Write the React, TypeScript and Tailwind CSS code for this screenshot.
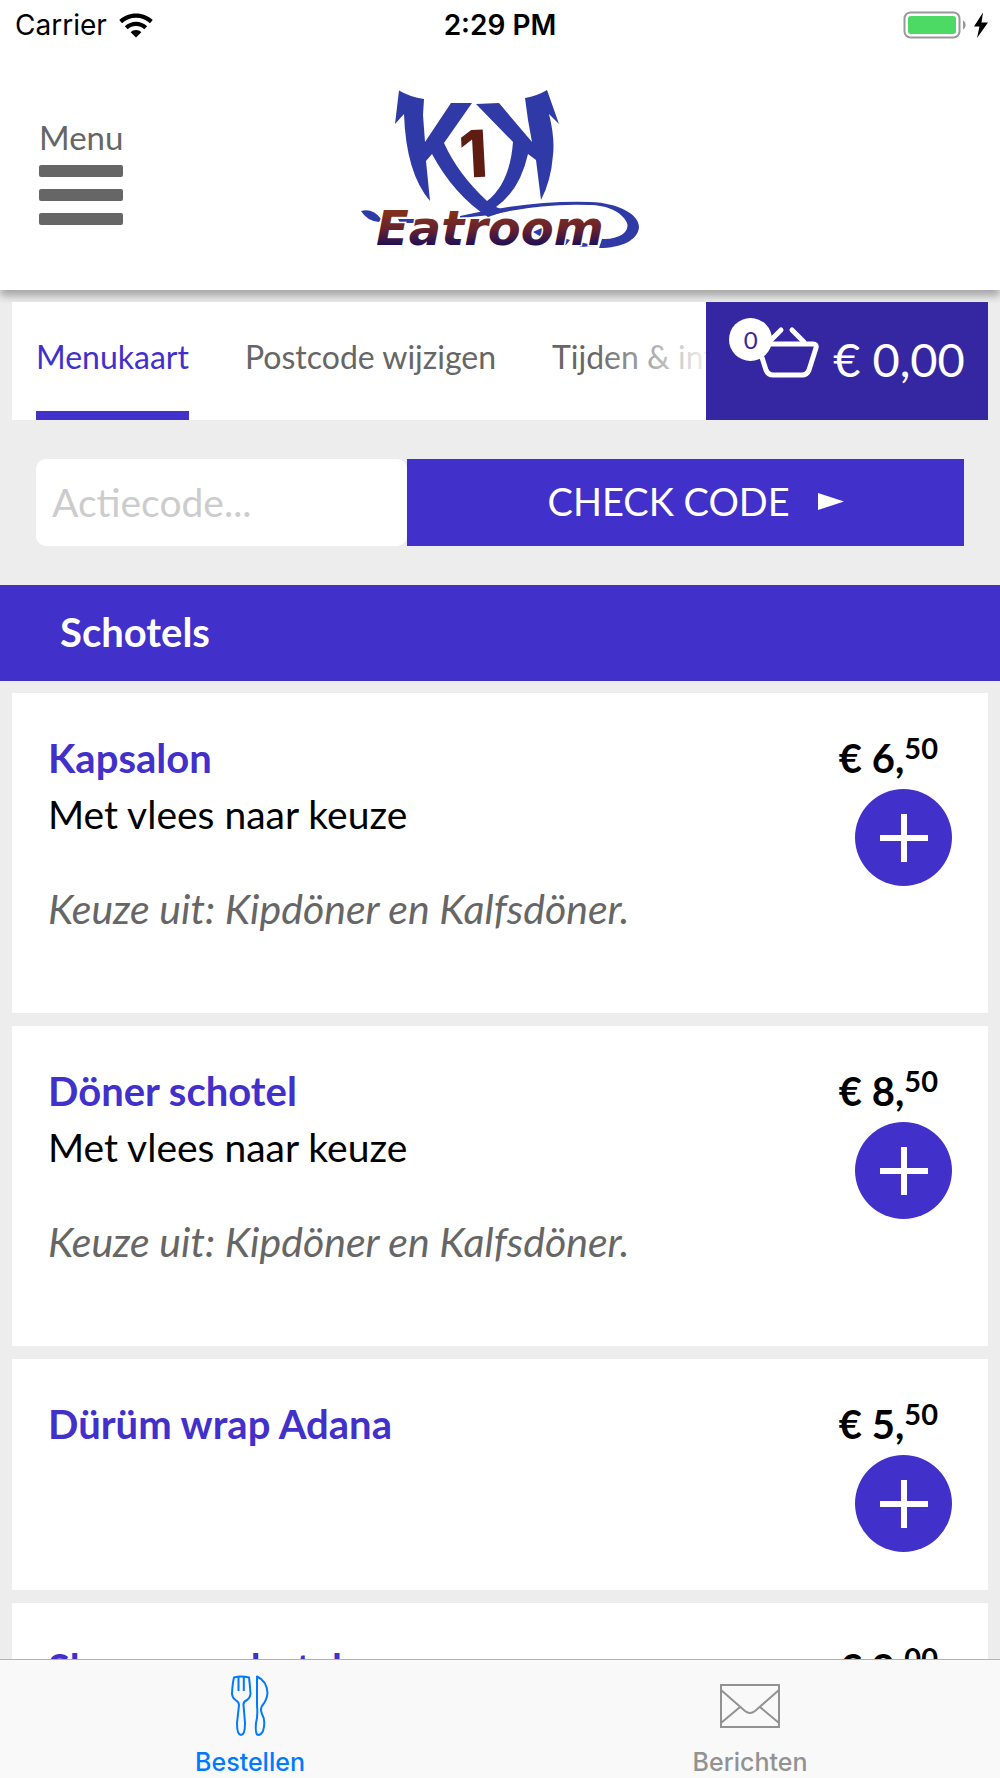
import { useState } from "react";

type Dish = {
  name: string;
  description?: string;
  options?: string;
  euros: string;
  cents: string;
};

const dishes: Dish[] = [
  {
    name: "Kapsalon",
    description: "Met vlees naar keuze",
    options: "Keuze uit: Kipdöner en Kalfsdöner.",
    euros: "6",
    cents: "50",
  },
  {
    name: "Döner schotel",
    description: "Met vlees naar keuze",
    options: "Keuze uit: Kipdöner en Kalfsdöner.",
    euros: "8",
    cents: "50",
  },
  { name: "Dürüm wrap Adana", euros: "5", cents: "50" },
  { name: "Shoarma schotel", euros: "9", cents: "00" },
];

function StatusBar() {
  return (
    <div className="grid h-[50px] grid-cols-3 items-center px-[15px] font-['Inter',sans-serif] text-[28px] text-black">
      <div className="flex items-center gap-3">
        <span>Carrier</span>
        <svg width="34" height="25" viewBox="0 0 34 25" aria-hidden="true">
          <path d="M17 0.5C10.500.5 4.700 3 .3 7L3 10.200C6.700 6.700 11.600 4.700 17 4.700S27.300 6.700 31 10.200L33.700 7C29.300 3 23.500.5 17 .5Z" />
          <path d="M17 8.800C13 8.800 9 10.400 5.800 13.200L8.700 16.200C11 14.200 13.900 13 17 13S23 14.200 25.300 16.200L28.200 13.200C25 10.400 21 8.800 17 8.800Z" />
          <path d="M17 17C15 17 13 17.800 11.700 19.200L17 24.500L22.300 19.200C21 17.800 19 17 17 17Z" />
        </svg>
      </div>
      <span className="text-center font-semibold">2:29 PM</span>
      <svg className="-mr-1 justify-self-end" width="86" height="28" viewBox="0 0 86 28" aria-hidden="true">
        <rect x="1.500" y="1.500" width="55" height="25" rx="6" fill="none" stroke="#999" strokeWidth="2" />
        <rect x="5" y="5" width="48" height="18" rx="3" fill="#4cd964" />
        <path d="M60 9.500C63.500 11 63.500 17 60 18.500Z" fill="#999" />
        <path d="M80 1.500L71 15.500H76.500L74 27L85 11.500H78.500Z" />
      </svg>
    </div>
  );
}

function Logo() {
  return (
    <svg width="300" height="180" viewBox="0 0 300 180" role="img" aria-label="K1K Eatroom">
      <defs>
        <linearGradient id="eatroom" gradientUnits="userSpaceOnUse" x1="0" y1="131" x2="0" y2="165">
          <stop offset="0.1" stopColor="#80301b" />
          <stop offset="0.55" stopColor="#642130" />
          <stop offset="1" stopColor="#1f1055" />
        </linearGradient>
      </defs>
      <g fill="#2f3aa6">
        <path d="M49 10.500Q60 17 74 19L73 35L75 62L101 23H122L94 63Q108 94 137 121Q160 103 163 62L126 24L149 23L182 62L178 40L175 18Q187 16 197 10L209 44L199 34Q205 58 203 75Q201 101 191 120L186 80L178 74Q170 110 146 127L156 131L138 137Q104 115 82 74L76 81L80 121Q56 93 54 34L45 44Z" />
        <path d="M11 131Q23 128 31 139L29 142Q17 141 11 131Z" />
        <path d="M110 136Q182 120 240 122C270 123 289 135 289 147C288 160 272 168 249 168L252 159C270 160 280 151 277 143C272 131 255 125 240 125Q190 123 141 135L110 138Z" />
        <path d="M48 139H76L70 143H50ZM183 152L196 146L193 158ZM208 156L220 160L216 165L206 164ZM226 161L246 166L230 167Z" />
      </g>
      <text x="109" y="97" fill="#5e1c13" fontFamily="Inter" fontWeight="800" fontSize="65" transform="rotate(-3 128 74)">
        1
      </text>
      <text
        x="26"
        y="165"
        fill="url(#eatroom)"
        stroke="#fff"
        strokeWidth="3"
        paintOrder="stroke"
        fontFamily="DejaVu Sans"
        fontWeight="700"
        fontStyle="italic"
        fontSize="48"
      >
        Eatroom
      </text>
    </svg>
  );
}

function BasketIcon() {
  return (
    <svg width="64" height="54" viewBox="0 0 64 54" fill="none" stroke="#fff" strokeWidth="5" strokeLinecap="round" strokeLinejoin="round" aria-hidden="true">
      <path d="M5 18H56Q60 18 59 22L52 44Q50 49 45 49H16Q11 49 9 44L2 22Q1 18 5 18Z" />
      <path d="M13 15L24 4M35 4L47 16" />
    </svg>
  );
}

function PlusIcon() {
  return (
    <svg width="48" height="48" viewBox="0 0 48 48" stroke="#fff" strokeWidth="6" aria-hidden="true">
      <path d="M24 0V48M0 24H48" />
    </svg>
  );
}

function CutleryIcon() {
  return (
    <svg width="38" height="62" viewBox="0 0 38 62" fill="none" stroke="currentColor" strokeWidth="2" strokeLinejoin="round" aria-hidden="true">
      <path d="M3 2.500Q10 .5 18 2.500Q19 10 19.500 19Q19 23 16 25Q12 27 12.500 30L14 48Q14 60 10 60Q6 60 6 48L8 30Q8 27 4.500 25Q1.500 23 1 19Q1.500 8 3 2.500Z" />
      <path d="M7.500 2V16M12.800 2V16" />
      <path d="M26 1.500Q36 6 36.500 18Q36 25 31 31Q29 34 31 39Q35 46 32 56Q30 60 27 60Q24 59 25 48Q27 40 26 31Z" />
    </svg>
  );
}

function EnvelopeIcon() {
  return (
    <svg width="60" height="44" viewBox="0 0 60 44" fill="none" stroke="currentColor" strokeWidth="2" aria-hidden="true">
      <rect x="1" y="1" width="58" height="42" />
      <path d="M1 6L25 27Q30 31 35 27L59 6M1 39L20 23M59 39L40 23" />
    </svg>
  );
}

function DishCard({ dish, onAdd }: { dish: Dish; onAdd: () => void }) {
  return (
    <article className="flex justify-between bg-white px-9 pt-9 pb-[38px]">
      <div>
        <h3 className="text-[40px] leading-[58px] font-bold text-[#4230cb]">{dish.name}</h3>
        {dish.description && <p className="text-[39px] leading-[54px] text-black">{dish.description}</p>}
        {dish.options && (
          <p className="mt-[42px] mb-10 text-[41px] leading-[52px] text-[#666] italic">{dish.options}</p>
        )}
      </div>
      <div className="flex flex-col items-end">
        <p className="flex pr-[14px] text-[40px] leading-[58px] font-bold text-black">
          € {dish.euros},<span className="text-[29px] leading-[38px]">{dish.cents}</span>
        </p>
        <button
          type="button"
          onClick={onAdd}
          aria-label={`${dish.name} toevoegen`}
          className="mt-[2px] flex size-[97px] shrink-0 items-center justify-center rounded-full bg-[#4230cb]"
        >
          <PlusIcon />
        </button>
      </div>
    </article>
  );
}

export default function App() {
  const [count, setCount] = useState(0);
  const [code, setCode] = useState("");

  return (
    <div className="flex h-screen flex-col bg-[#ededed] font-['Lato',sans-serif]">
      <header className="h-[290px] shrink-0 bg-white shadow-[0_6px_8px_rgba(0,0,0,0.3)]">
        <StatusBar />
        <div className="grid grid-cols-[1fr_auto_1fr] items-center px-[39px] pt-[30px]">
          <button type="button" className="flex w-[84px] flex-col gap-3 pt-[6px] text-[#666]">
            <span className="text-[33px] leading-8">Menu</span>
            <span className="h-3 w-full rounded-xs bg-[#666]" />
            <span className="h-3 w-full rounded-xs bg-[#666]" />
            <span className="h-3 w-full rounded-xs bg-[#666]" />
          </button>
          <Logo />
        </div>
      </header>

      <main className="flex-1 overflow-y-auto pt-3 [scrollbar-width:none]">
        <div className="mx-3 flex h-[118px] bg-white">
          <nav className="relative flex min-w-0 flex-1 gap-14 overflow-hidden pl-6 text-[32px] whitespace-nowrap text-[#666]">
            <a href="#menukaart" className="flex items-center border-b-9 border-[#4230cb] text-[#4230cb]">
              Menukaart
            </a>
            <a href="#postcode" className="flex items-center pb-[9px]">
              Postcode wijzigen
            </a>
            <a href="#tijden" className="flex items-center pb-[9px]">
              Tijden &amp; info
            </a>
            <div className="absolute inset-y-0 right-0 w-28 bg-linear-to-r from-white/0 to-white/90" />
          </nav>
          <button type="button" className="flex w-[282px] items-center justify-center gap-3 bg-[#3427a1] text-white">
            <span className="relative pb-4 pl-7">
              <BasketIcon />
              <span className="absolute -top-2 left-0 flex size-[43px] items-center justify-center rounded-full bg-white text-2xl text-[#3427a1]">
                {count}
              </span>
            </span>
            <span className="pb-1 text-[47px]">€ 0,00</span>
          </button>
        </div>

        <form className="flex h-[165px] items-center px-9" onSubmit={(e) => e.preventDefault()}>
          <input
            type="text"
            aria-label="Actiecode"
            placeholder="Actiecode..."
            value={code}
            onChange={(e) => setCode(e.target.value)}
            className="h-[87px] w-2/5 rounded-[10px] bg-white px-4 pb-[2px] text-[39px] text-[#666] placeholder:text-[#ccc]"
          />
          <button type="submit" className="flex h-[87px] w-3/5 items-center justify-center gap-7 bg-[#4230cb] pb-[2px] pl-5 text-[38px] text-white">
            CHECK CODE
            <svg width="26" height="17" viewBox="0 0 26 17" fill="#fff" aria-hidden="true">
              <path d="M0 0L26 8.500L0 17Z" />
            </svg>
          </button>
        </form>

        <h2 className="flex h-24 items-center bg-[#4230cb] px-[60px] pb-[2px] text-[40px] font-bold text-white">Schotels</h2>

        <section className="flex flex-col gap-[13px] px-3 pt-3">
          {dishes.map((dish) => (
            <DishCard key={dish.name} dish={dish} onAdd={() => setCount(count + 1)} />
          ))}
        </section>
      </main>

      <nav className="grid h-[119px] shrink-0 grid-cols-2 border-t border-[#b2b2b2] bg-[#f9f9f9] font-['Inter',sans-serif] text-[25px] font-medium">
        <a href="#bestellen" className="flex flex-col items-center pt-[14px] text-[#007aff]">
          <span className="flex h-16 items-center">
            <CutleryIcon />
          </span>
          <span className="pt-[6px]">Bestellen</span>
        </a>
        <a href="#berichten" className="flex flex-col items-center pt-[14px] text-[#929292]">
          <span className="flex h-16 items-center">
            <EnvelopeIcon />
          </span>
          <span className="pt-[6px]">Berichten</span>
        </a>
      </nav>
    </div>
  );
}
